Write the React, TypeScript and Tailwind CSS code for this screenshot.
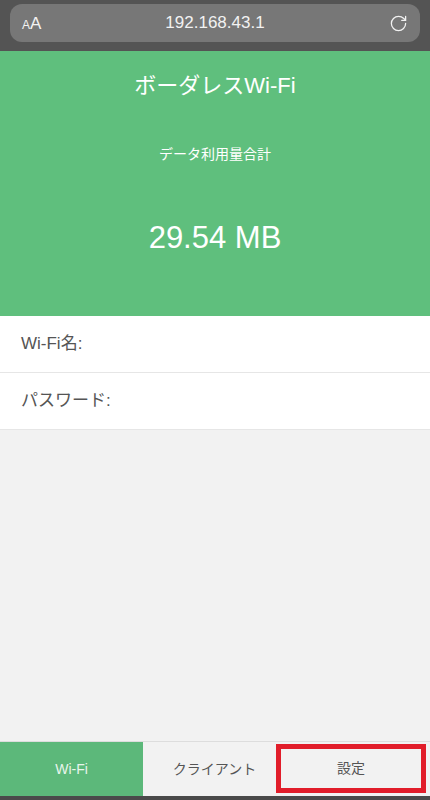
import { RotateCw } from 'lucide-react'

const tabs = ['Wi-Fi', 'クライアント', '設定']

export default function App() {
  return (
    <div
      className="flex h-[800px] w-[430px] flex-col overflow-hidden bg-[#f2f2f2]"
      style={{ fontFamily: '"Liberation Sans", "Noto Sans CJK JP", sans-serif' }}
    >
      {/* Browser bar */}
      <div className="h-[51px] shrink-0 bg-[#545454] px-[10px] pt-[4px]">
        <div className="flex h-[38px] items-center rounded-[12px] bg-[#777777] px-[12px] text-[#f2f2f2]">
          <span className="w-[40px] text-[17px] leading-none">
            <span className="text-[12px]">A</span>A
          </span>
          <span className="flex-1 text-center text-[17px]">192.168.43.1</span>
          <span className="flex w-[40px] justify-end">
            <RotateCw size={19} strokeWidth={1.6} />
          </span>
        </div>
      </div>

      {/* Header */}
      <div className="flex h-[265px] shrink-0 flex-col items-center bg-[#5fbf7d] text-white">
        <div className="mt-[18px] text-[22px]">ボーダレスWi-Fi</div>
        <div className="mt-[42px] text-[14px]">データ利用量合計</div>
        <div className="mt-[50px] text-[31px]">29.54 MB</div>
      </div>

      {/* Info rows */}
      <div className="bg-white text-[17px] text-[#555555]">
        <div className="flex h-[57px] items-center border-b border-[#e6e6e6] px-[21px]">Wi-Fi名:</div>
        <div className="flex h-[57px] items-center border-b border-[#e6e6e6] px-[21px]">パスワード:</div>
      </div>

      <div className="flex-1" />

      {/* Tab bar */}
      <div className="flex h-[55px] shrink-0 border-t border-[#dddddd] bg-[#f2f2f2] text-[14px] text-[#555555]">
        {tabs.map((t, i) => (
          <div
            key={t}
            className={
              i === 0
                ? 'flex w-[143px] items-center justify-center bg-[#5cb87a] text-[#e8f5ec]'
                : i === 1
                  ? 'flex w-[133px] items-center justify-center pl-[10px]'
                  : 'mt-[2px] mb-[3px] mr-[4px] flex flex-1 items-center justify-center border-[5px] border-[#e11d2a]'
            }
          >
            {t}
          </div>
        ))}
      </div>
      <div className="h-[4px] shrink-0 bg-[#4a4a4a]" />
    </div>
  )
}
